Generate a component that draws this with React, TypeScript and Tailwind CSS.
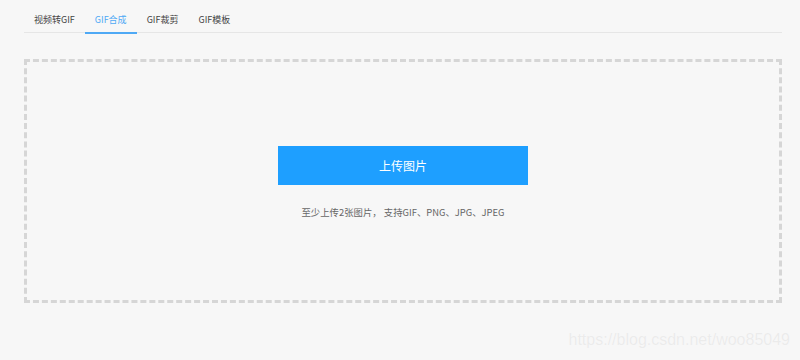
const tabs = ["视频转GIF", "GIF合成", "GIF裁剪", "GIF模板"];

const App: React.FC = () => {
  const active = 1;
  return (
    <div
      className="relative w-[800px] h-[360px] overflow-hidden bg-[#f7f7f7] pl-[24px] pr-[18px]"
      style={{ fontFamily: '"Noto Sans CJK SC", "Noto Sans", sans-serif' }}
    >
      {/* tabs */}
      <div className="flex h-[33px] items-end border-b border-[#e6e6e6]">
        {tabs.map((t, i) => (
          <div
            key={t}
            className={
              i === active
                ? "-mb-[2px] h-[34px] border-b-2 border-[#4fa9f5] px-[10px] pt-[8px] text-[9px] leading-[24px] text-[#4fa9f5]"
                : "-mb-[2px] h-[34px] border-b-2 border-transparent px-[10px] pt-[8px] text-[9px] leading-[24px] text-[#444]"
            }
          >
            {t}
          </div>
        ))}
      </div>

      {/* upload area */}
      <div className="mt-[26px] flex h-[244px] flex-col items-center border-[3px] border-dashed border-[#d6d6d6] pt-[84px]">
        <button className="h-[39px] w-[250px] bg-[#1e9fff] text-[12px] text-white">
          上传图片
        </button>
        <p className="mt-[20px] text-[9.4px] leading-[14px] text-[#666]">
          至少上传2张图片， 支持GIF、PNG、JPG、JPEG
        </p>
      </div>

      {/* watermark */}
      <span
        className="absolute right-[10px] bottom-[11px] text-[16px] leading-[18px] text-[#ebebeb]"
        style={{ fontFamily: '"Liberation Sans", Arial, sans-serif', textShadow: "0 0 1px #fff" }}
      >
        https://blog.csdn.net/woo85049
      </span>
    </div>
  );
};

export default App;
